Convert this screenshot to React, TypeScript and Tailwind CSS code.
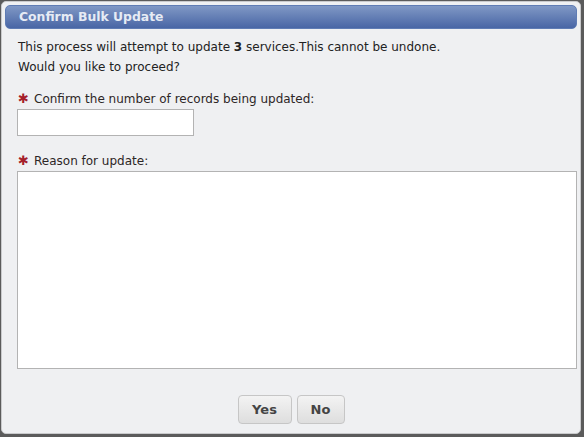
import React from "react";

export default function App() {
  const font = { fontFamily: '"DejaVu Sans", Verdana, sans-serif' };
  return (
    <div className="w-[584px] h-[437px] bg-[#5b5b5b] pt-[1px] pl-[1px] pr-[3px] pb-[3px]" style={font}>
      <div className="h-full rounded-[5px] border border-[#c9cacc] bg-[#eff0f2] p-[3px] flex flex-col">
        <div className="h-[24px] shrink-0 rounded-[5px] border border-[#5f7cb4] bg-gradient-to-b from-[#8098c5] to-[#4966a5] pl-[13px] flex items-center">
          <span className="text-[12.4px] font-bold text-[#e6ebf4]">Confirm Bulk Update</span>
        </div>
        <div className="px-[12px] pt-[8px] text-[12px] leading-[20px] text-[#222]">
          <p className="pl-[1px]">
            This process will attempt to update <b>3</b> services.This cannot be undone.
          </p>
          <p className="pl-[1px]">Would you like to proceed?</p>
          <div className="mt-[12px] h-[20px] flex items-center text-[#2d2626]">
            <span className="text-[#a51f2b] text-[13px] w-[17px] pl-[1px] leading-[20px]">✱</span>
            <span>Confirm the number of records being updated:</span>
          </div>
          <input className="block w-[177px] h-[27px] bg-white border border-[#b3b3b3] outline-none" />
          <div className="mt-[15px] h-[20px] flex items-center text-[#2d2626]">
            <span className="text-[#a51f2b] text-[13px] w-[17px] pl-[1px] leading-[20px]">✱</span>
            <span>Reason for update:</span>
          </div>
          <textarea className="block w-[560px] h-[198px] bg-white border border-[#b3b3b3] outline-none resize-none" />
        </div>
        <div className="mt-[26px] flex justify-center gap-[5px]">
          <button className="w-[54px] h-[29px] rounded-[4px] border border-[#c6c6c6] bg-gradient-to-b from-[#f3f3f3] to-[#dedede] text-[13px] font-bold text-[#444]">
            Yes
          </button>
          <button className="w-[48px] h-[29px] rounded-[4px] border border-[#c6c6c6] bg-gradient-to-b from-[#f3f3f3] to-[#dedede] text-[13px] font-bold text-[#444]">
            No
          </button>
        </div>
      </div>
    </div>
  );
}
